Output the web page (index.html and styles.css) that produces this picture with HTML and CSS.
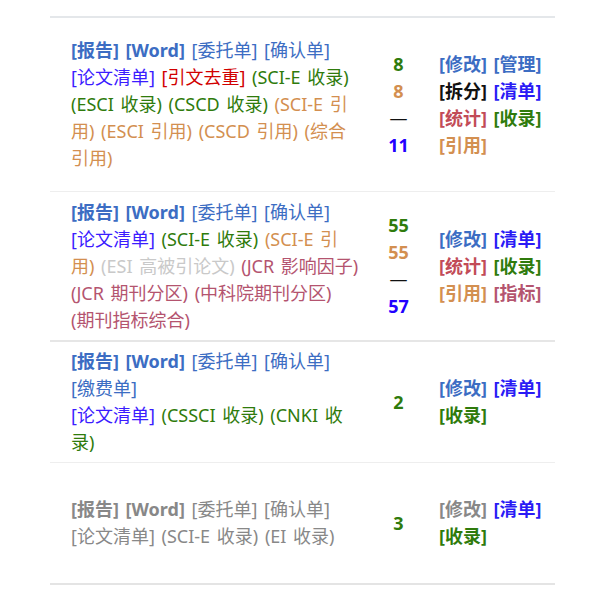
FILE: index.html
```html
<!DOCTYPE html>
<html lang="zh-CN">
<head>
<meta charset="utf-8">
<title>论文清单</title>
<link rel="stylesheet" href="styles.css">
</head>
<body>
<div class="table">
  <div class="row r1">
    <div class="c-links">
      <span class="blue b">[报告]</span> <span class="blue b">[Word]</span> <span class="blue">[委托单]</span> <span class="blue">[确认单]</span><br>
      <span class="violet">[论文清单]</span> <span class="red">[引文去重]</span> <span class="green">(SCI-E 收录)</span> <span class="green">(ESCI 收录)</span> <span class="green">(CSCD 收录)</span> <span class="tan">(SCI-E 引用)</span> <span class="tan">(ESCI 引用)</span> <span class="tan">(CSCD 引用)</span> <span class="tan">(综合引用)</span>
    </div>
    <div class="c-num">
      <div class="green">8</div>
      <div class="tan">8</div>
      <div class="dash">—</div>
      <div class="nblue">11</div>
    </div>
    <div class="c-act">
      <span class="blue">[修改]</span> <span class="blue">[管理]</span> <span class="black">[拆分]</span> <span class="vblue">[清单]</span> <span class="rose">[统计]</span> <span class="green">[收录]</span> <span class="tan">[引用]</span>
    </div>
  </div>
  <div class="row r2">
    <div class="c-links">
      <span class="blue b">[报告]</span> <span class="blue b">[Word]</span> <span class="blue">[委托单]</span> <span class="blue">[确认单]</span><br>
      <span class="violet">[论文清单]</span> <span class="green">(SCI-E 收录)</span> <span class="tan">(SCI-E 引用)</span> <span class="light">(ESI 高被引论文)</span> <span class="mauve">(JCR 影响因子)</span> <span class="mauve">(JCR 期刊分区)</span> <span class="mauve">(中科院期刊分区)</span> <span class="mauve">(期刊指标综合)</span>
    </div>
    <div class="c-num">
      <div class="green">55</div>
      <div class="tan">55</div>
      <div class="dash">—</div>
      <div class="nblue">57</div>
    </div>
    <div class="c-act">
      <span class="blue">[修改]</span> <span class="vblue">[清单]</span> <span class="rose">[统计]</span> <span class="green">[收录]</span> <span class="tan">[引用]</span> <span class="mauve">[指标]</span>
    </div>
  </div>
  <div class="row r3">
    <div class="c-links">
      <span class="blue b">[报告]</span> <span class="blue b">[Word]</span> <span class="blue">[委托单]</span> <span class="blue">[确认单]</span><br>
      <span class="blue">[缴费单]</span><br>
      <span class="violet">[论文清单]</span> <span class="green">(CSSCI 收录)</span> <span class="green">(CNKI 收录)</span>
    </div>
    <div class="c-num">
      <div class="green">2</div>
    </div>
    <div class="c-act">
      <span class="blue">[修改]</span> <span class="vblue">[清单]</span> <span class="green">[收录]</span>
    </div>
  </div>
  <div class="row r4">
    <div class="c-links">
      <span class="grey b">[报告]</span> <span class="grey b">[Word]</span> <span class="grey">[委托单]</span> <span class="grey">[确认单]</span><br>
      <span class="grey">[论文清单]</span> <span class="grey">(SCI-E 收录)</span> <span class="grey">(EI 收录)</span>
    </div>
    <div class="c-num">
      <div class="green">3</div>
    </div>
    <div class="c-act">
      <span class="grey">[修改]</span> <span class="vblue">[清单]</span> <span class="green">[收录]</span>
    </div>
  </div>
</div>
</body>
</html>
```

FILE: styles.css
```css
html, body {
  margin: 0;
  padding: 0;
  background: #ffffff;
}

body {
  font-family: "Noto Sans", "Noto Sans CJK SC", sans-serif;
  font-size: 18px;
  line-height: 27px;
  word-spacing: 2px;
  color: #333333;
}

.table {
  margin: 16px 0 0 50px;
  width: 505px;
  border-top: 2px solid #e4e7ea;
}

.row {
  display: grid;
  grid-template-columns: 309px 78px 118px;
  align-items: center;
  box-sizing: border-box;
}

.r1 { height: 174px; border-bottom: 1px solid #eeeeee; }
.r2 { height: 150px; border-bottom: 2px solid #e6e6e6; }
.r3 { height: 121px; border-bottom: 1px solid #eeeeee; }
.r4 { height: 122px; border-bottom: 2px solid #e4e4e4; }

.c-links {
  padding-left: 21px;
}

.c-num {
  text-align: center;
  font-weight: bold;
  padding-left: 1px;
}

.c-num .dash {
  font-weight: normal;
  color: #111111;
}

.c-act {
  padding-left: 2px;
  font-weight: bold;
}

.b { font-weight: bold; }

.blue { color: #3c6dc3; }
.violet { color: #3b1cff; }
.vblue { color: #2a1bf5; }
.nblue { color: #2200ff; }
.red { color: #d10000; }
.green { color: #2f7b0c; }
.tan { color: #d38f50; }
.light { color: #c9c9c9; }
.mauve { color: #b4546f; }
.rose { color: #c24b57; }
.black { color: #111111; }
.grey { color: #888888; }
```
